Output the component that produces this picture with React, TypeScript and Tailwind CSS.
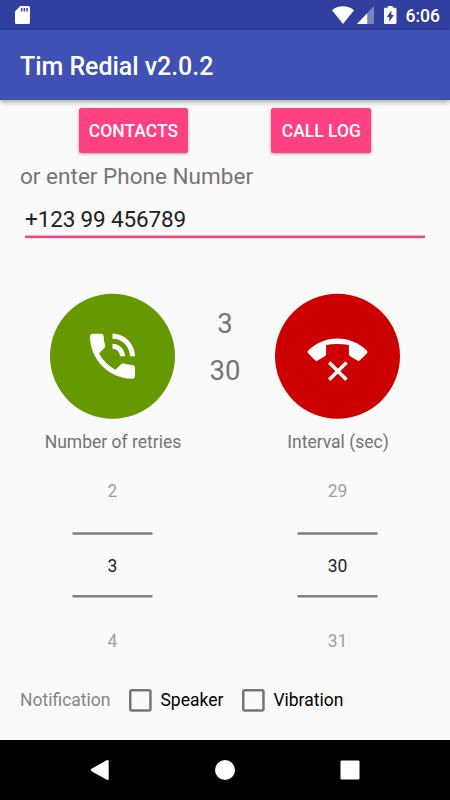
import { useState } from "react"

function StatusBar() {
    return (
        <div className="flex h-[30px] items-center bg-[#303f9f] pr-[10px] pl-[15px] text-white">

            <svg className="h-[18px] w-[15px]" viewBox="0 0 15 18" fill="none">
                <path
                    fill="currentColor"
                    fillRule="evenodd"
                    d="M5.3 0H13.4Q15 0 15 1.6V16.4Q15 18 13.4 18H1.6Q0 18 0 16.4V5.4ZM5.9 2V5.5H7.4V2ZM8.6 2V5.5H10.1V2ZM11.3 2V5.5H12.8V2Z"
                />
            </svg>

            <svg className="ml-auto h-[18px] w-[22px]" viewBox="0 0 22 18" fill="currentColor">
                <path d="M11 18 0 4.2C3 1.6 6.8 0.2 11 0.2S19 1.6 22 4.2Z" />
            </svg>

            <svg className="ml-[3px] h-[18px] w-[17px]" viewBox="0 0 17 18" fill="currentColor">
                <path opacity="0.35" d="M0 18 17 0V18Z" />
                <path d="M0 18 10.2 7.2V18Z" />
            </svg>

            <svg className="ml-[10.5px] h-[18px] w-[12.5px]" viewBox="0 0 12.5 18">
                <path
                    fill="currentColor"
                    fillRule="evenodd"
                    d="M3.8 0H8.7V1.8H11.3Q12.5 1.8 12.5 3V16.8Q12.5 18 11.3 18H1.2Q0 18 0 16.8V3Q0 1.8 1.2 1.8H3.8ZM7.4 4.4 2.8 11H5.3V15.8L9.8 8.9H7.4Z"
                />
            </svg>

            <span className="ml-[9px] pt-px text-[17.5px] leading-[30px] font-medium">6:06</span>

        </div>
    )
}

function Picker({ label, value }: { label: string; value: number }) {
    return (
        <div className="flex w-[125px] flex-col items-center text-[17.5px] leading-[24px]">

            <span className="pl-px whitespace-nowrap text-[#737373]">{label}</span>

            <span className="mt-[25px] text-[#a0a0a0]">{value - 1}</span>

            <svg className="mt-[29.5px] h-[3px] w-[81px]" viewBox="0 0 81 3">
                <rect x="0.5" y="0.25" width="80" height="2.5" fill="#808080" />
            </svg>

            <div className="flex h-[59.5px] items-center pt-[2px] text-[#212121]">
                {value}
            </div>

            <svg className="h-[3px] w-[81px]" viewBox="0 0 81 3">
                <rect x="0.5" y="0" width="80" height="2.5" fill="#808080" />
            </svg>

            <span className="mt-[31px] text-[#a0a0a0]">{value + 1}</span>

        </div>
    )
}

function CheckBox({ label }: { label: string }) {

    const [checked, setChecked] = useState(false)

    return (
        <button
            onClick={() => setChecked(!checked)}
            className="flex items-center gap-[8px] text-black"
        >
            <svg className="h-[23px] w-[23px]" viewBox="0 0 23 23" fill="none" stroke="#757575">
                <rect x="1.25" y="1.25" width="20.2" height="20.2" rx="1.5" strokeWidth="2.5" />
                {checked && <path d="m5.5 11.5 4 4 8-8" strokeWidth="2.5" />}
            </svg>
            {label}
        </button>
    )
}

export default function App() {

    const [phone, setPhone] = useState("+123 99 456789")

    return (
        <main className="flex h-[800px] w-[450px] flex-col overflow-hidden bg-[#fafafa] font-['Roboto',sans-serif]">

            <StatusBar />

            <header className="flex h-[70px] items-center bg-[#3f51b5] px-5 pt-[3px] text-[25px] font-medium tracking-[-0.05px] text-white shadow-[0_2px_5px_rgba(0,0,0,0.35)]">
                Tim Redial v2.0.2
            </header>

            <div className="mt-[7.5px] flex h-[45px] pl-[79px] text-[17.5px] font-medium text-white">
                <button className="h-[45px] w-[109px] rounded-[2.5px] bg-[#ff4081] pt-[2px] shadow-[0_1px_3px_rgba(0,0,0,0.35)]">
                    CONTACTS
                </button>
                <button className="ml-[83.3px] h-[45px] w-[100px] rounded-[2.5px] bg-[#ff4081] pt-[2px] shadow-[0_1px_3px_rgba(0,0,0,0.35)]">
                    CALL LOG
                </button>
            </div>

            <p className="mt-[8.5px] pl-5 text-[22.5px] leading-[30px] tracking-[0.02px] text-[#757575]">
                or enter Phone Number
            </p>

            <div className="mx-[25px] mt-[9px] flex h-[39px] flex-col">
                <input
                    value={phone}
                    onChange={(e) => setPhone(e.target.value)}
                    className="h-[35px] w-full shrink-0 pt-[2px] text-[22.5px] tracking-[-0.14px] text-[#212121] outline-none"
                />
                <svg className="h-[4px] w-[400px] shrink-0" viewBox="0 0 400 4">
                    <rect y="0.6" width="400" height="2.5" fill="#ff4081" />
                </svg>
            </div>

            <div className="mt-[54px] flex h-[125px] px-[50px]">

                <svg
                    className="h-[126px] w-[125px] cursor-pointer"
                    viewBox="0 0 125 126"
                    role="button"
                    aria-label="Start call"
                >
                    <circle cx="62.5" cy="63.2" r="62.5" fill="#669900" />
                    <path
                        fill="white"
                        transform="translate(32.5 33.2) scale(2.5)"
                        d="M20 15.5c-1.25 0-2.45-.2-3.57-.57-.35-.11-.74-.03-1.02.24l-2.2 2.2c-2.83-1.44-5.15-3.75-6.59-6.58l2.2-2.21c.28-.27.36-.66.25-1.01C8.7 6.45 8.5 5.25 8.5 4c0-.55-.45-1-1-1H4c-.55 0-1 .45-1 1 0 9.39 7.61 17 17 17 .55 0 1-.45 1-1v-3.5c0-.55-.45-1-1-1zM19 12h2c0-4.97-4.03-9-9-9v2c3.87 0 7 3.13 7 7zm-4 0h2c0-2.76-2.24-5-5-5v2c1.66 0 3 1.34 3 3z"
                    />
                </svg>

                <div className="flex w-[100px] flex-col items-center pt-[13.5px] text-[27.5px] leading-[34px] text-[#757575]">
                    <span>3</span>
                    <span className="mt-[13px]">30</span>
                </div>

                <svg
                    className="h-[126px] w-[125px] cursor-pointer"
                    viewBox="0 0 125 126"
                    role="button"
                    aria-label="Stop call"
                >
                    <circle cx="62.5" cy="63.2" r="62.5" fill="#cc0000" />
                    <g fill="white" transform="translate(31.5 33.2)">
                        <path d="M31 12.2C42 12.2 52.5 16.6 60.3 24.2Q61.8 25.6 60.4 27.1L53.4 34Q52 35.3 50.4 34.1L43.7 30Q42.4 29.2 42.4 27.8V18.9Q31 16.5 19.6 18.9V27.8Q19.6 29.2 18.3 30L11.6 34.1Q10 35.3 8.6 34L1.6 27.1Q0.2 25.6 1.7 24.2C9.5 16.6 20 12.2 31 12.2Z" />
                        <path d="M22.7 36.2 40 53.5M40 36.2 22.7 53.5" stroke="white" strokeWidth="3.5" />
                    </g>
                </svg>

            </div>

            <div className="mt-[11.5px] flex justify-between px-[50px]">
                <Picker label="Number of retries" value={3} />
                <Picker label="Interval (sec)" value={30} />
            </div>

            <div className="mt-auto flex h-[80px] items-center pl-5 text-[17.5px] text-[#858585]">
                <span className="mr-[19px]">Notification</span>
                <CheckBox label="Speaker" />
                <div className="ml-[19px]">
                    <CheckBox label="Vibration" />
                </div>
            </div>

            <nav className="flex h-[60px] shrink-0 items-center justify-center gap-[105px] bg-black">
                <svg className="h-5 w-5" viewBox="0 0 20 20" fill="white">
                    <path d="M16.6 0.2Q18.7-.5 18.7 1.3V18.7Q18.7 20.5 16.8 19.8L1.5 11.2Q0.2 10 1.5 8.8Z" />
                </svg>
                <svg className="h-5 w-5" viewBox="0 0 20 20" fill="white">
                    <circle cx="10" cy="10" r="10" />
                </svg>
                <svg className="h-5 w-5" viewBox="0 0 20 20" fill="white">
                    <rect x="0.5" y="0.5" width="19" height="19" rx="1.2" />
                </svg>
            </nav>

        </main>
    )
}
